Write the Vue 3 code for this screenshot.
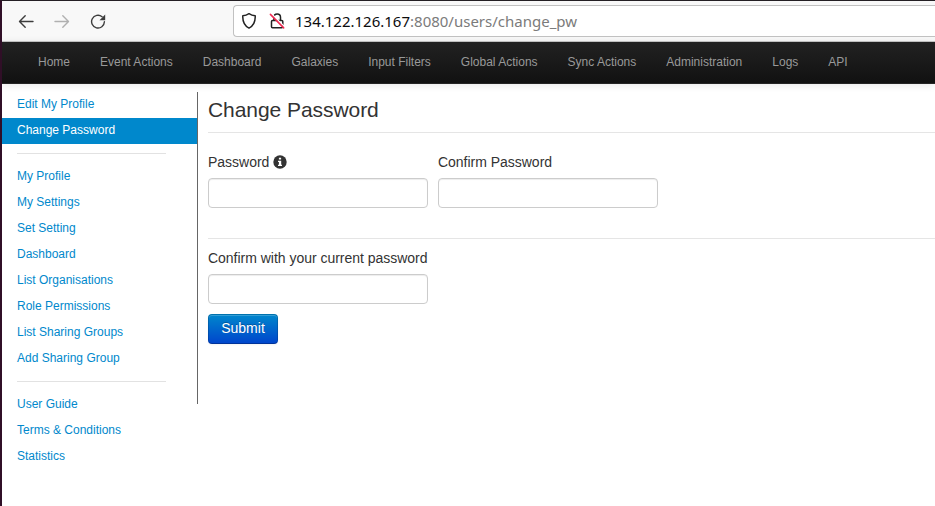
<script setup>
const navItems = ['Home', 'Event Actions', 'Dashboard', 'Galaxies', 'Input Filters', 'Global Actions', 'Sync Actions', 'Administration', 'Logs', 'API']
const menuGroups = [
  ['Edit My Profile', 'Change Password'],
  ['My Profile', 'My Settings', 'Set Setting', 'Dashboard', 'List Organisations', 'Role Permissions', 'List Sharing Groups', 'Add Sharing Group'],
  ['User Guide', 'Terms & Conditions', 'Statistics'],
]
const active = 'Change Password'
</script>

<template>
  <div class="window">
    <header class="toolbar">
      <div class="controls">
        <svg width="16" height="16" viewBox="0 0 16 16" class="icon dark"><path d="M15 8.500H1.800M7.200 2.800L1.500 8.500l5.700 5.700" /></svg>
        <svg width="16" height="16" viewBox="0 0 16 16" class="icon faded"><path d="M1 8.500h13.200M8.800 2.800L14.500 8.500l-5.700 5.700" /></svg>
        <svg width="16" height="16" viewBox="0 0 16 16" class="icon dark"><path d="M12.100 3.700A6.400 6.400 0 1 0 14.400 8.800" /><path class="solid" d="M15.200 1.500v5.700H9.500z" /></svg>
      </div>
      <div class="address">
        <svg width="16" height="18" viewBox="0 0 16 18" class="icon black"><path d="M8 1.700c2 1.400 4.100 2 6.200 2.100.3 5.600-1.500 9.800-6.200 12.300C3.300 13.600 1.500 9.400 1.800 3.800 3.900 3.700 6 3.100 8 1.700z" /></svg>
        <svg width="16" height="18" viewBox="0 0 16 18" class="icon lock">
          <path d="M4.900 8.200V5.200a3.300 3.300 0 0 1 6.600 0v3M3.500 8.400h9.300q1 0 1 1v5.400q0 1-1 1H3.500q-1 0-1-1V9.400q0-1 1-1z" />
          <path class="halo" d="M2.300 1.600L15.700 15" />
          <path class="slash" d="M1.400 2.400L14.700 15.900" />
        </svg>
        <span class="url"><span class="host">134.122.126.167</span><span class="path">:8080/users/change_pw</span></span>
      </div>
    </header>
    <nav class="navbar">
      <a v-for="item in navItems" :key="item">{{ item }}</a>
    </nav>
    <div class="page">
      <aside class="sidebar">
        <ul v-for="(group, i) in menuGroups" :key="i">
          <li v-for="item in group" :key="item" :class="{ active: item === active }">{{ item }}</li>
        </ul>
      </aside>
      <main class="content">
        <h1>Change Password</h1>
        <div class="fields">
          <label class="field">
            <span class="label">Password
              <svg class="info" width="14" height="14" viewBox="0 0 14 14"><circle cx="7" cy="7" r="6.700" fill="#333" /><path d="M5.900 2.700h2.200v1.900H5.900zM5 5.800h3.200v3.900H9v1.300H5V9.700h.9V7.100H5z" fill="#fff" /></svg>
            </span>
            <input type="password">
          </label>
          <label class="field">
            <span class="label">Confirm Password</span>
            <input type="password">
          </label>
        </div>
        <label class="field current">
          <span class="label">Confirm with your current password</span>
          <input type="password">
        </label>
        <button type="button">Submit</button>
      </main>
    </div>
  </div>
</template>

<style>
body { margin: 0; background: #fff; overflow: hidden; }
</style>

<style scoped>
* { box-sizing: border-box; }
.window {
  height: 506px;
  border-left: 2px solid #300f27;
  border-top: 1px solid #241f24;
  font-family: "Liberation Sans", Arial, sans-serif;
  color: #333;
  overflow: hidden;
}
.toolbar {
  display: flex;
  height: 41px;
  padding: 4px 0 4px 16px;
  background: #f8f8f8;
  border-bottom: 1px solid #c6c6c6;
}
.controls { display: flex; align-items: center; gap: 20px; width: 215px; }
.icon { fill: none; stroke-width: 1.4; stroke-linecap: round; stroke-linejoin: round; flex: none; }
.dark { stroke: #3c3c3c; }
.faded { stroke: #b0b0b0; }
.black { stroke: #222; stroke-width: 1.5; }
.lock { stroke: #222; stroke-width: 1.5; }
.solid { fill: #3c3c3c; stroke: none; }
.halo { stroke: #fff; }
.slash { stroke: #f02850; }
.address {
  display: flex;
  flex: 1;
  align-items: center;
  gap: 12px;
  padding-left: 7px;
  height: 32px;
  background: #fff;
  border: 1px solid #c1c1c1;
  border-right: 0;
  border-radius: 4px 0 0 4px;
}
.url { margin-left: -2px; font: 15px/20px "Noto Sans", sans-serif; white-space: nowrap; }
.host { color: #0c0c0d; }
.path { color: #7b7b7b; }
.navbar {
  display: flex;
  height: 42px;
  padding: 0 21px;
  background: linear-gradient(#222, #111);
  border-bottom: 1px solid #252525;
  box-shadow: 0 1px 8px rgba(0, 0, 0, .1);
}
.navbar a { padding: 0 15px; font-size: 12px; line-height: 40px; color: #999; }
.page { display: flex; align-items: flex-start; padding-top: 8px; }
.sidebar { width: 196px; height: 312px; border-right: 1px solid #666; }
ul { margin: 0; padding: 0; list-style: none; }
ul + ul::before { content: ""; display: block; height: 1px; width: 149px; margin: 0 0 10px 15px; background: #e2e2e2; }
ul + ul { padding-top: 9px; }
li { height: 26px; padding-left: 15px; font-size: 12px; line-height: 24px; color: #08c; }
.active { background: #08c; color: #fff; }
.content { flex: 1; padding-left: 10px; }
h1 { margin: 0; height: 41px; font-size: 21px; font-weight: 400; line-height: 36px; letter-spacing: -.06px; border-bottom: 1px solid #e5e5e5; }
.fields { display: flex; gap: 10px; height: 106px; padding-top: 19px; border-bottom: 1px solid #e5e5e5; }
.field { display: block; width: 220px; }
.label { display: flex; align-items: center; gap: 4px; height: 20px; margin-bottom: 6px; font-size: 14px; line-height: 20px; letter-spacing: -.02px; white-space: nowrap; }
.current { padding-top: 9px; }
input {
  display: block;
  width: 220px;
  height: 30px;
  border: 1px solid #ccc;
  border-radius: 4px;
  background: #fff;
  box-shadow: inset 0 1px 1px rgba(0, 0, 0, .075);
}
button {
  display: block;
  width: 70px;
  height: 30px;
  margin-top: 10px;
  padding: 0 0 2px;
  font: 14px/20px "Liberation Sans", Arial, sans-serif;
  color: #fff;
  text-shadow: 0 -1px 0 rgba(0, 0, 0, .25);
  background: linear-gradient(#08c, #04c) border-box;
  border: 1px solid rgba(0, 0, 0, .15);
  border-bottom-color: rgba(0, 0, 0, .25);
  border-radius: 4px;
  box-shadow: inset 0 1px 0 rgba(255, 255, 255, .2), 0 1px 2px rgba(0, 0, 0, .05);
}
</style>
